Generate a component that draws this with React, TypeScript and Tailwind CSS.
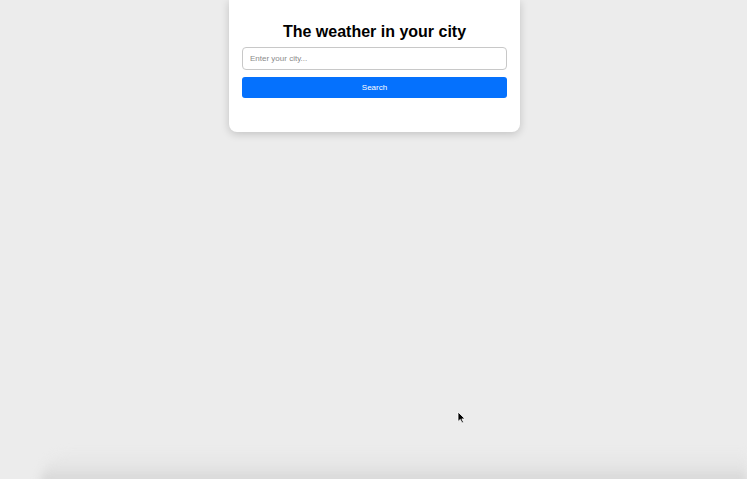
import { useState } from 'react'

export default function App() {
  const [city, setCity] = useState('')

  return (
    <div className="relative h-[479px] w-full overflow-hidden bg-[#ececec] font-['Liberation_Sans',Arial,sans-serif]">
      <div className="flex justify-center pl-[2px]">
        <div className="w-[291px] rounded-b-lg bg-white px-[13px] pt-[21px] pb-[34px] shadow-[0_2px_8px_rgba(0,0,0,0.18)]">
          <h1 className="text-center text-[16px] font-bold leading-[21px] text-black">The weather in your city</h1>
          <input
            value={city}
            onChange={(e) => setCity(e.target.value)}
            placeholder="Enter your city..."
            className="mt-[5px] block h-[23px] w-full rounded-[4px] border border-[#c8c8c8] px-[7px] text-[8px] text-black outline-none placeholder:text-[#8a8a8a]"
          />
          <button className="mt-[7px] block h-[21px] w-full rounded-[3px] bg-[#0571fd] text-[8px] font-medium text-white">
            Search
          </button>
        </div>
      </div>

      {/* dock shadow at bottom */}
      <div className="pointer-events-none absolute -bottom-[6px] left-[40px] right-0 h-[34px] rounded-tl-[60px] bg-gradient-to-b from-transparent via-[#e4e4e4] to-[#d2d2d2] blur-[4px]" />

      {/* mouse cursor */}
      <svg className="absolute left-[457px] top-[411px]" width="9" height="13" viewBox="0 0 9 13">
        <path d="M1 1 L1 10.5 L3.3 8.4 L5 12 L6.5 11.3 L4.9 7.9 L8 7.9 Z" fill="#000" stroke="#fff" strokeWidth="0.8" />
      </svg>
    </div>
  )
}
